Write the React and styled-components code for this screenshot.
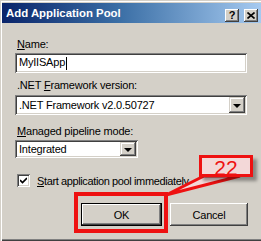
import React from "react";
import styled, { createGlobalStyle } from "styled-components";

const Global = createGlobalStyle`
  html, body { margin: 0; padding: 0; overflow: hidden; background: #d4d0c8; }
  * { box-sizing: border-box; }
`;

const Window = styled.div`
  position: relative;
  width: 261px;
  height: 241px;
  background: #d4d0c8;
  padding: 3px 0 2px 2px;
  box-shadow: inset 1px 1px #d4d0c8, inset 2px 2px #ffffff, inset 0 -1px #404040, inset 0 -2px #808080;
  font-family: "Liberation Sans", Arial, sans-serif;
  font-size: 11px;
  color: #000;
  display: flex;
  flex-direction: column;
`;

const TitleBar = styled.div`
  height: 20px;
  display: flex;
  align-items: flex-start;
  justify-content: space-between;
  padding: 0 3px 0 4px;
  background: linear-gradient(to right, #0a246a 0%, #3a6ea5 45%, #a6caf0 100%);
`;

const Title = styled.div`
  color: #fff;
  font-weight: bold;
  font-size: 11.4px;
  line-height: 20px;
`;

const CaptionButtons = styled.div`
  display: flex;
  gap: 5px;
  margin-top: 6px;
`;

const CapBtn = styled.div`
  width: 14px;
  height: 13px;
  background: #d4d0c8;
  box-shadow: inset -1px -1px #404040, inset 1px 1px #ffffff, inset -2px -2px #808080;
  display: flex;
  align-items: center;
  justify-content: center;
  font-weight: bold;
  font-size: 11px;
  line-height: 1;
`;

const Body = styled.div`
  display: flex;
  flex-direction: column;
  padding: 15px 14px 0 13px;
  letter-spacing: -0.2px;
`;

const Label = styled.div`
  line-height: 13px;
  height: 13px;
  margin-top: ${(p) => p.$mt || 0}px;
  margin-left: 2px;
`;

const Key = styled.span`
  text-decoration: underline;
  text-underline-offset: 1px;
`;

const Sunken = styled.div`
  margin-top: ${(p) => p.$mt || 0}px;
  width: ${(p) => p.$w || "100%"};
  height: ${(p) => p.$h || 20}px;
  background: #fff;
  box-shadow: inset 1px 1px #808080, inset -1px -1px #ffffff, inset 2px 2px #404040, inset -2px -2px #d4d0c8;
  display: flex;
  align-items: center;
  padding: 2px 2px 2px 4px;
`;

const FieldText = styled.span`
  flex: 1;
  white-space: nowrap;
`;

const Caret = styled.span`
  display: inline-block;
  width: 1px;
  height: 13px;
  background: #000;
  vertical-align: middle;
  margin-left: 1px;
`;

const DropBtn = styled.div`
  width: 16px;
  height: 100%;
  background: #d4d0c8;
  box-shadow: inset -1px -1px #404040, inset 1px 1px #d4d0c8, inset -2px -2px #808080, inset 2px 2px #ffffff;
  display: flex;
  align-items: center;
  justify-content: center;
`;

const Arrow = styled.div`
  width: 0;
  height: 0;
  border-left: 4px solid transparent;
  border-right: 4px solid transparent;
  border-top: 4px solid #000;
  margin-top: 1px;
`;

const CheckRow = styled.div`
  display: flex;
  align-items: center;
  gap: 7px;
  margin-top: 16px;
  margin-left: 2px;
`;

const CheckLabel = styled.span`
  letter-spacing: -0.38px;
`;

const CheckBox = styled.div`
  width: 13px;
  height: 13px;
  background: #fff;
  box-shadow: inset 1px 1px #808080, inset -1px -1px #ffffff, inset 2px 2px #404040, inset -2px -2px #d4d0c8;
  display: flex;
  align-items: center;
  justify-content: center;
`;

const ButtonRow = styled.div`
  display: flex;
  justify-content: flex-end;
  gap: 8px;
  margin-top: 16px;
  margin-right: -1px;
`;

const PushButton = styled.div`
  width: ${(p) => p.$w}px;
  height: 23px;
  background: #d4d0c8;
  display: flex;
  align-items: center;
  justify-content: center;
  box-shadow: ${(p) =>
    p.$default
      ? "inset 0 0 0 1px #000, inset -2px -2px #404040, inset 2px 2px #ffffff, inset -3px -3px #808080"
      : "inset -1px -1px #404040, inset 1px 1px #ffffff, inset -2px -2px #808080"};
`;

const RedFrame = styled.div`
  position: absolute;
  left: 74px;
  top: 192px;
  width: 94px;
  height: 41px;
  border: 4px solid #ee1111;
`;

const Tail = styled.svg`
  position: absolute;
  left: 0;
  top: 0;
  overflow: visible;
`;

const Callout = styled.div`
  position: absolute;
  left: 199px;
  top: 155px;
  width: 54px;
  height: 22px;
  border: 3px solid #ee1111;
  background: #f3d8d8;
  box-shadow: 4px 4px 3px rgba(0, 0, 0, 0.35);
  color: #ee1111;
  font-family: "Liberation Sans", Arial, sans-serif;
  font-size: 21px;
  line-height: 16px;
  text-align: center;
  padding-top: 2px;
`;

export default function App() {
  return (
    <>
      <Global />
      <Window>
        <TitleBar>
          <Title>Add Application Pool</Title>
          <CaptionButtons>
            <CapBtn>?</CapBtn>
            <CapBtn>
              <svg width="8" height="7" viewBox="0 0 8 7">
                <path d="M0.5 0.5 L7.5 6.5 M7.5 0.5 L0.5 6.5" stroke="#000" strokeWidth="1.6" />
              </svg>
            </CapBtn>
          </CaptionButtons>
        </TitleBar>
        <Body>
          <Label>
            <Key>N</Key>ame:
          </Label>
          <Sunken $mt={2} $h={20}>
            <FieldText>
              MyIISApp
              <Caret />
            </FieldText>
          </Sunken>
          <Label $mt={6}>
            .NET <Key>F</Key>ramework version:
          </Label>
          <Sunken $mt={3} $h={20}>
            <FieldText>.NET Framework v2.0.50727</FieldText>
            <DropBtn>
              <Arrow />
            </DropBtn>
          </Sunken>
          <Label $mt={10}>
            <Key>M</Key>anaged pipeline mode:
          </Label>
          <Sunken $mt={2} $w="123px" $h={18}>
            <FieldText>Integrated</FieldText>
            <DropBtn>
              <Arrow />
            </DropBtn>
          </Sunken>
          <CheckRow>
            <CheckBox>
              <svg width="7" height="7" viewBox="0 0 7 7">
                <path d="M0 3 L2.5 5.5 L7 1" stroke="#000" strokeWidth="1.6" fill="none" />
              </svg>
            </CheckBox>
            <CheckLabel>
              <Key>S</Key>tart application pool immediately
            </CheckLabel>
          </CheckRow>
          <ButtonRow>
            <PushButton $w={81} $default>
              OK
            </PushButton>
            <PushButton $w={78}>Cancel</PushButton>
          </ButtonRow>
        </Body>
        <RedFrame />
        <Tail width="261" height="241">
          <polygon points="166,195 204,176 240,176" fill="#f3d8d8" stroke="#ee1111" strokeWidth="3" strokeLinejoin="miter" />
        </Tail>
        <Callout>22</Callout>
      </Window>
    </>
  );
}
